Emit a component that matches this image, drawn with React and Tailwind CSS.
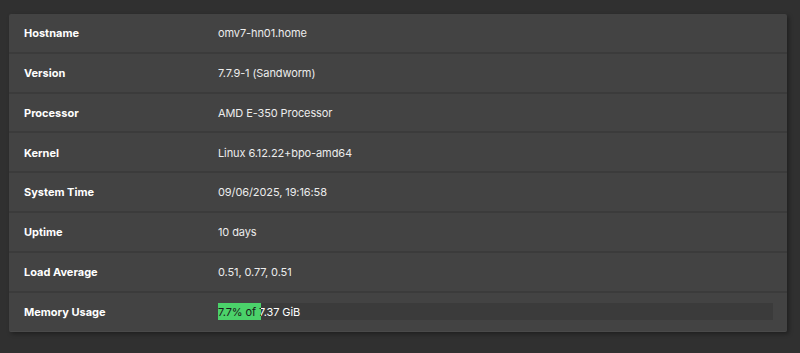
import React from "react";

const rows = [
  ["Hostname", "omv7-hn01.home"],
  ["Version", "7.7.9-1 (Sandworm)"],
  ["Processor", "AMD E-350 Processor"],
  ["Kernel", "Linux 6.12.22+bpo-amd64"],
  ["System Time", "09/06/2025, 19:16:58"],
  ["Uptime", "10 days"],
  ["Load Average", "0.51, 0.77, 0.51"],
];

export default function App() {
  const memText = "7.7% of 7.37 GiB";
  return (
    <div className="w-[800px] h-[353px] bg-[#303030] pt-[14px] pl-[9px] pr-[13px] font-['Inter',sans-serif] text-[11px]">
      <div className="bg-[#434343] rounded-[2px] shadow-[2px_2px_4px_rgba(0,0,0,0.35)] border-b border-[#4a4a4a]">
        {rows.map(([k, v]) => (
          <div key={k} className="flex items-center h-[39.8px] pt-[1px] border-b-2 border-[#3b3b3b] pl-[15px]">
            <div className="w-[194px] font-bold text-white">{k}</div>
            <div className="text-[#ececec] tracking-[-0.1px]">{v}</div>
          </div>
        ))}
        <div className="flex items-center h-[38.5px] pl-[15px] pr-[14px]">
          <div className="w-[194px] font-bold text-white">Memory Usage</div>
          <div className="relative flex-1 h-[17px] bg-[#3b3b3b] tracking-[-0.1px]">
            <div className="absolute inset-0 flex items-center text-white whitespace-nowrap">{memText}</div>
            <div className="absolute left-0 top-0 bottom-0 w-[43px] bg-[#4bd26a] overflow-hidden">
              <div className="h-full flex items-center text-[#1b1b1b] whitespace-nowrap">{memText}</div>
            </div>
          </div>
        </div>
      </div>
    </div>
  );
}
